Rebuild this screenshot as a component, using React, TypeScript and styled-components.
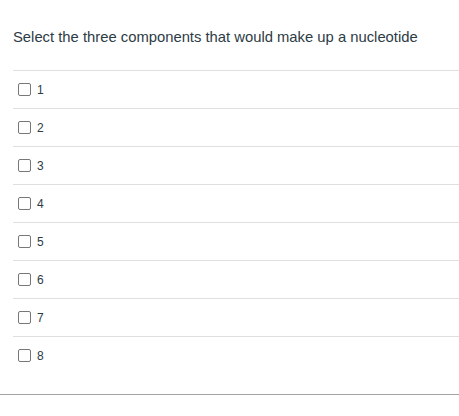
import React from "react";
import styled, { createGlobalStyle } from "styled-components";

const Global = createGlobalStyle`
  body { margin: 0; background: #fff; font-family: "Liberation Sans", Arial, sans-serif; }
`;

const Page = styled.div`
  width: 459px;
`;

const Question = styled.div`
  padding-left: 13px;
`;

const Prompt = styled.p`
  margin: 0;
  padding: 27px 0 23px;
  font-size: 14.8px;
  line-height: 20px;
  color: #2d3b45;
`;

const List = styled.div`
  display: flex;
  flex-direction: column;
  padding-bottom: 20px;
`;

const Row = styled.label`
  display: flex;
  align-items: center;
  gap: 6px;
  height: 37px;
  border-top: 1px solid #dfdfdf;
  padding-left: 5px;
`;

const Box = styled.span`
  width: 11px;
  height: 11px;
  border: 1px solid #777;
  border-radius: 2px;
  background: #fff;
`;

const Label = styled.span`
  font-size: 12px;
  color: #2d3b45;
  line-height: 14px;
`;

const Footer = styled.div`
  border-top: 1px solid #a3a3a3;
`;

export default function App() {
  const options = ["1", "2", "3", "4", "5", "6", "7", "8"];
  return (
    <Page>
      <Global />
      <Question>
        <Prompt>Select the three components that would make up a nucleotide</Prompt>
        <List>
          {options.map((o) => (
            <Row key={o}>
              <Box />
              <Label>{o}</Label>
            </Row>
          ))}
        </List>
      </Question>
      <Footer />
    </Page>
  );
}
